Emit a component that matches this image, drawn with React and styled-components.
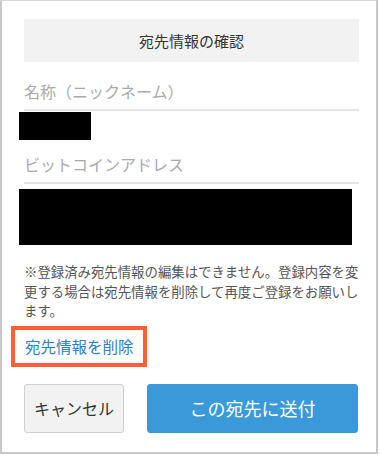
import React from 'react';
import styled, { createGlobalStyle } from 'styled-components';

const GlobalStyle = createGlobalStyle`
    html, body {
        margin: 0;
        padding: 0;
        background: #fff;
    }
    body {
        font-family: "Noto Sans CJK JP", "Noto Sans", sans-serif;
        color: #333;
    }
`

function App() {
    return (
        <>
            <GlobalStyle />
            <Frame>
                <Header>宛先情報の確認</Header>
                <Field>
                    <Label $top="14px">名称（ニックネーム）</Label>
                    <Redacted $w="72px" $h="28px" $top="1px" />
                </Field>
                <Field>
                    <Label $top="9px">ビットコインアドレス</Label>
                    <Redacted $w="333px" $h="56px" $top="5px" />
                </Field>
                <Notice>
                    ※登録済み宛先情報の編集はできません。登録内容を変更する場合は宛先情報を削除して再度ご登録をお願いします。
                </Notice>
                <Highlight>
                    <DeleteLink href="#">宛先情報を削除</DeleteLink>
                </Highlight>
                <Actions>
                    <Button>キャンセル</Button>
                    <Button $primary>この宛先に送付</Button>
                </Actions>
            </Frame>
        </>
    );
}

const Frame = styled.div`
    box-sizing: border-box;
    width: 378px;
    height: 454px;
    border: 1px solid #d6d6d6;
    border-left: 2px solid #c8c8c8;
    border-right: 2px solid #c8c8c8;
    border-bottom: 2px solid #c8c8c8;
    padding: 18px 17px 0 22px;
    display: flex;
    flex-direction: column;
`

const Header = styled.div`
    height: 43px;
    background: #f2f2f2;
    display: flex;
    align-items: center;
    justify-content: center;
    font-size: 15px;
    color: #333;
`

const Field = styled.div`
    display: flex;
    flex-direction: column;
`

const Label = styled.div`
    margin-top: ${p => p.$top};
    height: 33px;
    line-height: 31px;
    font-size: 16px;
    color: #aaa;
    border-bottom: 2px solid #e4e4e4;
`

const Redacted = styled.div`
    width: ${p => p.$w};
    height: ${p => p.$h};
    background: #000;
    margin-left: -5px;
    margin-top: ${p => p.$top};
`

const Notice = styled.p`
    width: 340px;
    margin: 17px 0 0;
    font-size: 13.4px;
    line-height: 19.5px;
    color: #555;
`

const Highlight = styled.div`
    align-self: flex-start;
    margin: 5px 0 0 -13px;
    border: 4px solid #ff5f38;
    padding: 4px 9px 5px 10px;
`

const DeleteLink = styled.a`
    font-size: 15.5px;
    line-height: 24px;
    color: #2a80c4;
    text-decoration: none;
`

const Actions = styled.div`
    display: flex;
    gap: 23px;
    margin-top: 17px;
`

const Button = styled.button`
    box-sizing: border-box;
    height: 49px;
    width: ${p => (p.$primary ? '211px' : '100px')};
    border-radius: 3px;
    border: 1px solid ${p => (p.$primary ? '#3a9ad9' : '#cfcfcf')};
    background: ${p => (p.$primary ? '#3a9ad9' : '#f2f2f2')};
    color: ${p => (p.$primary ? '#fff' : '#333')};
    font-family: "Noto Sans CJK JP", sans-serif;
    font-size: ${p => (p.$primary ? '18px' : '16px')};
    padding: 0;
    cursor: pointer;
`

export default App;
